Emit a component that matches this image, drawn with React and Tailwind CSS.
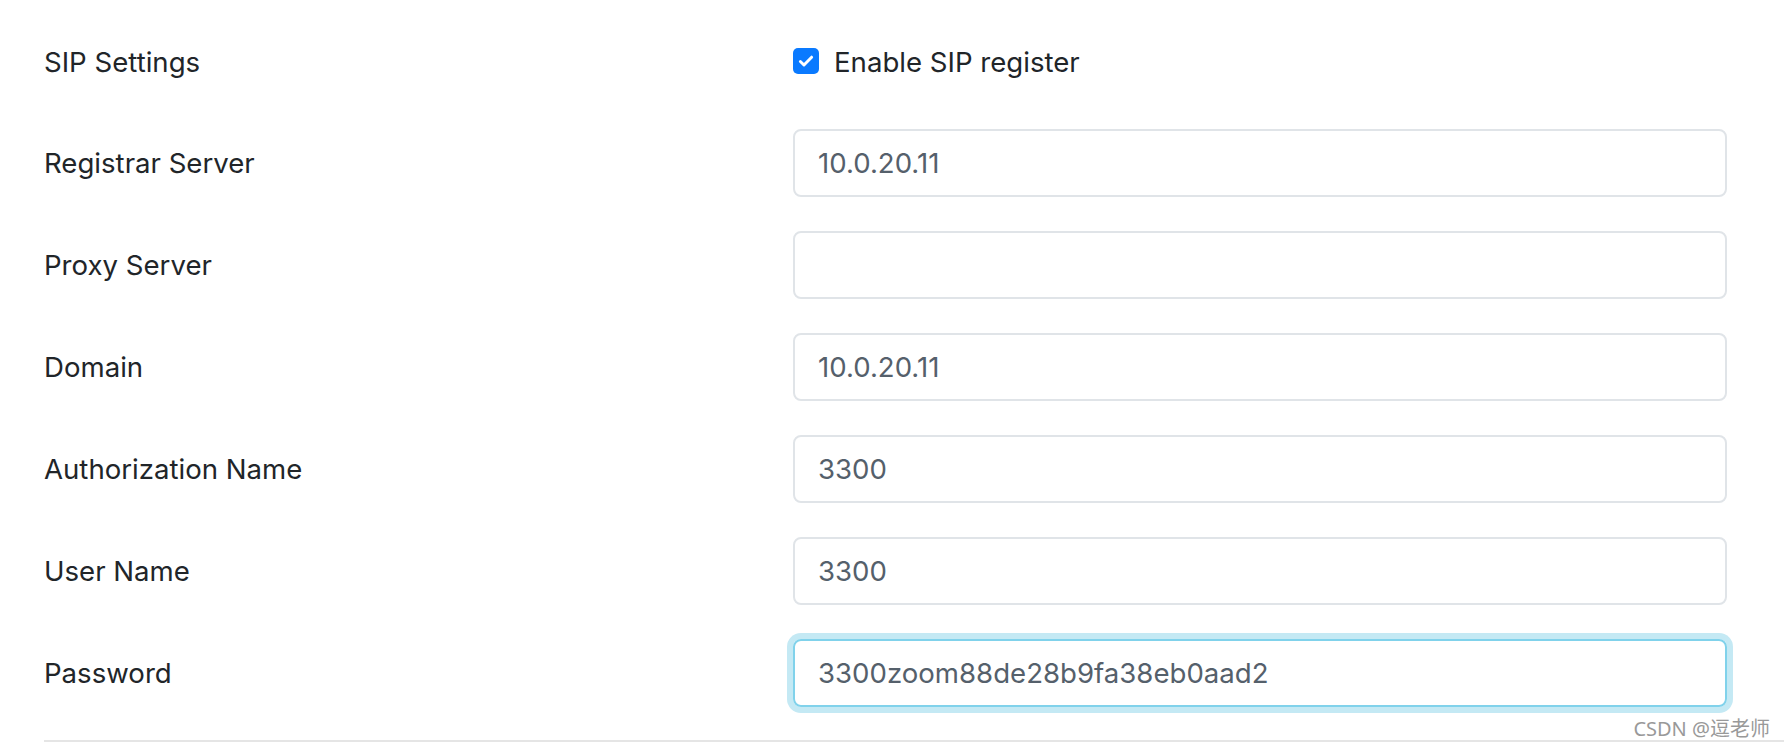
import React from "react";

const fields = [
  { label: "Registrar Server", value: "10.0.20.11" },
  { label: "Proxy Server", value: "" },
  { label: "Domain", value: "10.0.20.11" },
  { label: "Authorization Name", value: "3300" },
  { label: "User Name", value: "3300" },
  { label: "Password", value: "3300zoom88de28b9fa38eb0aad2", focused: true },
];

export default function App() {
  return (
    <div
      className="relative w-[1784px] h-[748px] bg-white overflow-hidden"
      style={{ fontFamily: "Inter, 'Noto Sans', sans-serif" }}
    >
      <div className="pl-[44px] pt-[27px] flex flex-col">
        <div className="flex flex-col gap-[34px] pr-[57px]">
          {/* SIP Settings row */}
          <div className="flex items-center h-[68px]">
            <div className="w-[749px] pt-[3px] text-[27.6px] text-[#212529]">SIP Settings</div>
            <label className="flex items-center gap-[15px] text-[27.6px] text-[#212529]">
              <span className="w-[26px] h-[26px] rounded-[5px] bg-[#0a7aff] flex items-center justify-center">
                <svg viewBox="0 0 16 16" className="w-[18px] h-[18px]">
                  <path
                    d="M3 8.4l3.2 3.2L13 4.6"
                    fill="none"
                    stroke="white"
                    strokeWidth="2.6"
                    strokeLinecap="round"
                    strokeLinejoin="round"
                  />
                </svg>
              </span>
              <span className="pt-[3px]">Enable SIP register</span>
            </label>
          </div>

          {fields.map((f) => (
            <div key={f.label} className="flex items-center h-[68px]">
              <div className="w-[749px] pt-[2px] text-[27.6px] text-[#212529]">{f.label}</div>
              <div
                className={`flex-1 h-[68px] rounded-[8px] border-2 flex items-center px-[23px] pt-[2px] text-[27.6px] text-[#55606b] ${
                  f.focused
                    ? "border-[#80d2eb] shadow-[0_0_0_6px_#c4e9f4]"
                    : "border-[#e0e4e8]"
                }`}
              >
                {f.value}
              </div>
            </div>
          ))}
        </div>

        <div className="mt-[33px] h-[2px] bg-[#e5e5e5]" />
      </div>

      {/* watermark */}
      <div
        className="absolute right-[14px] bottom-[9px] text-[20px] leading-none text-[#999999]"
        style={{ fontFamily: "'Noto Sans', 'Noto Sans CJK SC', sans-serif", textShadow: "0 0 2px #fff" }}
      >
        CSDN @逗老师
      </div>
    </div>
  );
}
